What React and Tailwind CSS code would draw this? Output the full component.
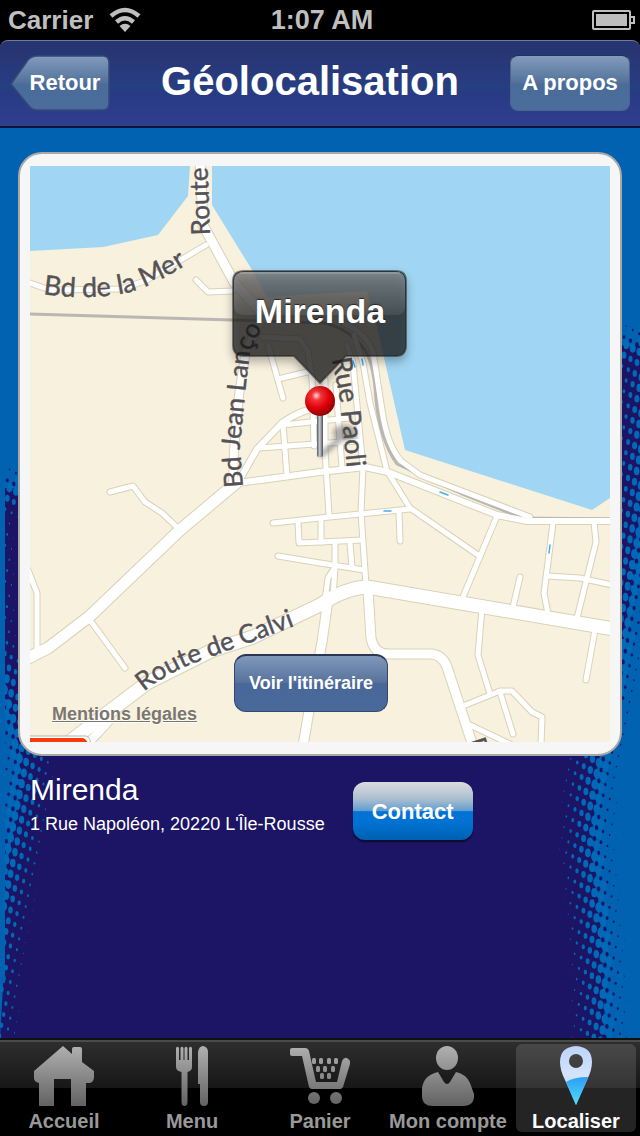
import React, { useMemo } from 'react';

const WATER_LEFT = 'M30 166 H190 L188 196 L158 235 L103 247 L30 251 Z';
const WATER_RIGHT = 'M212 166 V205 L252 270 L267 297 L367 291 L377 327 L405 450 L592 510 L610 498 V166 Z';

const RAILWAY = 'M30 314 L232 320 L325 323 Q352 330 366 352 Q374 366 376 400 Q380 440 397 464 L460 493 L522 518 L610 519';

// width + path of every street, thin ones first
const ROADS = [
  { w: 4, d: 'M30 283 L50 290 L120 289 L145 281 L206 245' },
  { w: 4, d: 'M196 280 L208 292 L233 291' },
  { w: 4, d: 'M110 492 L133 486 L145 502 L162 513 L180 530' },
  { w: 4, d: 'M90 620 L125 668' },
  { w: 4, d: 'M28 570 L37 593 V652' },
  { w: 5, d: 'M240 479 L257 449 L282 423 Q300 410 320 407' },
  { w: 4, d: 'M283 424 L287 476' },
  { w: 4, d: 'M282 425 L349 418' },
  { w: 4, d: 'M259 448 L357 441' },
  { w: 4, d: 'M262 337 L300 339 L308 352 L312 378' },
  { w: 4, d: 'M268 345 L283 398' },
  { w: 4, d: 'M278 379 L307 372' },
  { w: 4, d: 'M312 375 L314 446' },
  { w: 4, d: 'M325 380 L325 450 L329 515' },
  { w: 4, d: 'M336 385 L342 468' },
  { w: 4, d: 'M347 345 L353 363 L360 437 L363 467 L361 513 L366 585' },
  { w: 4, d: 'M354 335 L363 363 L370 403 L387 471 L410 508 L478 555' },
  { w: 4, d: 'M345 324 Q366 333 373 352 L382 410 Q387 445 401 461 L420 475 L530 517' },
  { w: 5, d: 'M238 483 L320 472 L365 467 L388 472 L497 515 L527 521 L612 521' },
  { w: 4, d: 'M273 523 L320 518 L410 509' },
  { w: 4, d: 'M298 522 L299 543 L362 540' },
  { w: 4, d: 'M321 518 V542' },
  { w: 4, d: 'M278 556 L320 563 L364 570' },
  { w: 4, d: 'M335 543 V567 L333 598' },
  { w: 4, d: 'M335 567 L328 578 L325 600' },
  { w: 4, d: 'M350 543 L352 567' },
  { w: 4, d: 'M399 513 L400 541' },
  { w: 4, d: 'M497 516 L463 597' },
  { w: 4, d: 'M553 523 L544 593 L548 614' },
  { w: 4, d: 'M594 522 L596 542 L577 618' },
  { w: 4, d: 'M547 576 L580 578 L612 585' },
  { w: 4, d: 'M520 577 L513 607' },
  { w: 4, d: 'M595 630 L586 680' },
  { w: 4, d: 'M482 608 L478 655 L490 694' },
  { w: 4, d: 'M463 706 L500 691 H512 L532 712 L542 717 L541 744' },
  { w: 4, d: 'M500 692 L513 734' },
  { w: 4, d: 'M470 725 L510 744' },
  { w: 7, d: 'M233 487 L234 450 L239 395 L246 350 L264 316' },
  { w: 8, d: 'M200 160 L203 225 L234 282 L266 318' },
  { w: 10, d: 'M20 662 L48 648 L90 616 L180 530 L236 483' },
  { w: 7, d: 'M108 722 L98 733 L86 745' },
  { w: 8, d: 'M328 600 L322 642 L310 705 L303 746' },
  { w: 8, d: 'M368 590 L371 638 Q374 654 388 654 H430 Q442 654 447 667 L473 746' },
  { w: 12, d: 'M64 746 L147 683 L213 650 L253 637 L320 605 Q345 588 367 587 L614 629' },
];

const ONE_WAY_MARKS = ['M440 492 l8 3', 'M384 511 h7', 'M550 545 l-1 8', 'M353 361 l2 6', 'M362 359 l1 6'];

// Edges of the dark area behind the page, as [y, x] stops
const LEFT_EDGE = [[470, -20], [640, -16], [680, 4], [720, 12], [760, 22], [800, 18], [850, 10], [900, 2], [950, -7], [1040, -16]];
const RIGHT_EDGE = [[300, 650], [500, 640], [560, 634], [620, 627], [700, 613], [740, 603], [780, 595], [850, 592], [900, 597], [970, 603], [1040, 604]];
const LEFT_TOP = 488;
const RIGHT_TOP = 346;

const edgeAt = (stops, y) => {
  if (y <= stops[0][0]) return stops[0][1];
  for (let i = 1; i < stops.length; i++) {
    const [y1, x1] = stops[i];
    const [y0, x0] = stops[i - 1];
    if (y <= y1) return x0 + ((x1 - x0) * (y - y0)) / (y1 - y0);
  }
  return stops[stops.length - 1][1];
};

// how far a point lies inside the dark area, negative when outside
const depthAt = (x, y) => {
  const top = x < 320 ? LEFT_TOP : RIGHT_TOP;
  return Math.min(x - edgeAt(LEFT_EDGE, y), edgeAt(RIGHT_EDGE, y) - x, y - top);
};

const buildHalftone = () => {
  const light = [];
  const dark = [];
  for (let i = -5; i < 120; i++) {
    for (let j = -40; j < 110; j++) {
      const x = i * 6.5 - j * 2.2;
      const y = i * 3.7 + j * 10.8;
      if (x > -6 && x < 646 && y > 300 && y < 1046) {
        const d = depthAt(x, y);
        if (d > -8 && d < 34) light.push({ x, y, r: 4.1 * (1 - Math.max(d, 0) / 36) });
      }
      const dx = x + 2.1;
      const dy = y + 7.2;
      if (dx > -6 && dx < 646 && dy > 300 && dy < 1046) {
        const d = depthAt(dx, dy);
        if (d <= 2 && d > -26) dark.push({ x: dx, y: dy, r: 2.3 * (1 + d / 28) });
      }
    }
  }
  return { light, dark };
};

const Backdrop = () => {
  const { light, dark } = useMemo(buildHalftone, []);
  const points = [
    `5,${LEFT_TOP}`,
    `320,${LEFT_TOP}`,
    `320,${RIGHT_TOP}`,
    `648,${RIGHT_TOP}`,
    ...RIGHT_EDGE.filter(([y]) => y > RIGHT_TOP).map(([y, x]) => `${x},${y}`),
    ...[...LEFT_EDGE].reverse().map(([y, x]) => `${Math.max(x, y < 984 ? 5 : 0)},${y}`),
  ].join(' ');

  return (
    <svg className="absolute inset-0 h-full w-full" viewBox="0 128 640 910" preserveAspectRatio="none" aria-hidden="true">
      <polygon points={points} fill="#1c1464" />
      {light.map((p, i) => <ellipse key={i} cx={p.x} cy={p.y} rx={p.r * 0.8} ry={p.r * 1.2} fill="#0069b8" />)}
      {dark.map((p, i) => <ellipse key={i} cx={p.x} cy={p.y} rx={p.r * 0.85} ry={p.r * 1.2} fill="#1c1464" />)}
      <rect x="0" y="460" width="5" height="523" fill="#0062b0" />
    </svg>
  );
};

const StatusBar = () => (
  <div className="grid h-10 grid-cols-3 items-center bg-black pl-2 pr-1 font-bold text-[#bfbfbf]">
    <div className="flex items-center gap-4 text-[26px] leading-10">
      Carrier
      <svg className="h-7 w-8" viewBox="0 0 32 28" fill="none" stroke="#bfbfbf" strokeWidth="4.500" aria-label="Wi-Fi">
        <path d="M2 10 Q16 -2 30 10" />
        <path d="M7.500 16 Q16 8.500 24.500 16" />
        <path d="M16 26 L10.500 20 Q16 15.500 21.500 20 Z" fill="#bfbfbf" stroke="none" />
      </svg>
    </div>
    <div className="text-center text-[27px] leading-10">1:07 AM</div>
    <svg className="h-5 w-11 justify-self-end" viewBox="0 0 44 20" aria-label="Battery">
      <rect x="1" y="1" width="37" height="18" rx="1" fill="none" stroke="#bfbfbf" strokeWidth="2" />
      <rect x="4" y="4" width="31" height="12" fill="#bfbfbf" />
      <path d="M38 7 h4 v6 h-4" fill="none" stroke="#bfbfbf" strokeWidth="2" />
    </svg>
  </div>
);

const Header = () => (
  <div className="bg-black">
    <header className="flex h-[88px] items-center rounded-t-lg border-b-2 border-t border-b-[#10143c] border-t-[#7079a5] bg-[linear-gradient(#26346f,#293b80_46%,#24407f_54%,#293a85_62%,#2f3f8e)] px-[10px] pb-[2px] text-white">
      <button className="relative h-[56px] w-[100px] pl-[10px] text-[22px] font-bold">
        <svg className="absolute inset-0 h-full w-full" viewBox="0 0 100 56" preserveAspectRatio="none" aria-hidden="true">
          <defs>
            <linearGradient id="back" x1="0" y1="0" x2="0" y2="1">
              <stop offset="0" stopColor="#839bbd" />
              <stop offset="0.5" stopColor="#527199" />
              <stop offset="0.52" stopColor="#496c9b" />
              <stop offset="1" stopColor="#4a6d9c" />
            </linearGradient>
          </defs>
          <path d="M1 29 L18 5 Q22 1 27 1 H93 Q99 1 99 8 V48 Q99 55 93 55 H27 Q22 55 19 51 Z" fill="url(#back)" stroke="#344978" strokeWidth="1.500" />
        </svg>
        <span className="relative">Retour</span>
      </button>
      <h1 className="flex-1 pb-1 text-center text-[40px] font-bold leading-none">Géolocalisation</h1>
      <button className="h-[56px] w-[120px] rounded-lg border border-[#4d648e] border-t-[#26305a] bg-[linear-gradient(#839bbd,#527199_50%,#496c9b_52%,#4a6d9c)] text-[22px] font-bold">
        A propos
      </button>
    </header>
  </div>
);

const MapDrawing = () => (
  <svg className="block h-full w-full" viewBox="30 166 580 576" preserveAspectRatio="xMidYMid slice" fontFamily="Lato, sans-serif">
    <defs>
      <path id="bdMer" d="M43 294 Q90 301 130 292 Q160 283 200 256" />
      <path id="bdJean" d="M243 487 L240 446 L246 385 L249 358 Q253 340 276 306" />
      <path id="ruePaoli" d="M332 359 L340 400 L348 478" />
      <path id="calvi" d="M144 692 Q168 672 200 661 L300 624" />
    </defs>
    <rect x="30" y="166" width="580" height="576" fill="#f8f1de" />
    <path d={WATER_LEFT} fill="#a0d6f3" />
    <path d={WATER_RIGHT} fill="#a0d6f3" />
    <g fill="none" strokeLinecap="round" strokeLinejoin="round">
      {ROADS.map((r) => <path key={r.d} d={r.d} stroke="#d9d2b8" strokeWidth={r.w + 3} />)}
      <path d={RAILWAY} stroke="#b9b6b4" strokeWidth="3" />
      {ROADS.map((r) => <path key={r.d} d={r.d} stroke="#ffffff" strokeWidth={r.w + 1} />)}
      {ONE_WAY_MARKS.map((d) => <path key={d} d={d} stroke="#45aef0" strokeWidth="1.500" />)}
    </g>
    <g fontSize="26" fill="#545256" stroke="#545256" strokeWidth="0.4">
      <text transform="translate(210 235) rotate(-92)">Route</text>
      <text fontSize="27"><textPath href="#bdMer">Bd de la Mer</textPath></text>
      <text><textPath href="#bdJean">Bd Jean Lanço</textPath></text>
      <text fontSize="27"><textPath href="#ruePaoli">Rue Paoli</textPath></text>
      <text><textPath href="#calvi">Route de Calvi</textPath></text>
      <text transform="translate(467 741) rotate(72)">R</text>
    </g>
    <path d="M28 736 H86 Q90 737 91 744 H28 Z" fill="#fff" stroke="#b9b3a4" />
    <path d="M28 738 H83 Q87 739 88 744 H28 Z" fill="#f93a0d" />
  </svg>
);

const Pin = () => (
  <svg className="absolute left-1/2 top-[218px] h-[76px] w-[84px] -translate-x-1/2" viewBox="-42 0 84 76" aria-hidden="true">
    <defs>
      <radialGradient id="pinHead" cx="0.38" cy="0.32" r="0.7">
        <stop offset="0" stopColor="#ffd9d9" />
        <stop offset="0.22" stopColor="#f4353a" />
        <stop offset="0.6" stopColor="#dd0208" />
        <stop offset="1" stopColor="#8d0004" />
      </radialGradient>
      <linearGradient id="pinStem">
        <stop offset="0" stopColor="#55585e" />
        <stop offset="0.45" stopColor="#c9cdd6" />
        <stop offset="1" stopColor="#4b4d52" />
      </linearGradient>
      <filter id="soft"><feGaussianBlur stdDeviation="2.500" /></filter>
    </defs>
    <g filter="url(#soft)" opacity="0.45">
      <path d="M0 72 L20 55" stroke="#333" strokeWidth="5" />
      <ellipse cx="25" cy="49" rx="12" ry="8" fill="#444" />
    </g>
    <rect x="-3" y="28" width="6" height="45" rx="2" fill="url(#pinStem)" />
    <circle cx="0" cy="17" r="15" fill="url(#pinHead)" />
  </svg>
);

const Callout = () => (
  <div className="absolute left-1/2 top-[104px] h-[114px] w-[176px] -translate-x-1/2">
    <svg className="absolute inset-0 h-full w-full overflow-visible drop-shadow-[0_5px_5px_rgba(0,0,0,0.4)]" viewBox="0 0 176 114" aria-hidden="true">
      <defs>
        <linearGradient id="gloss" x1="0" y1="0" x2="0" y2="1">
          <stop offset="0" stopColor="#fff" stopOpacity="0.32" />
          <stop offset="1" stopColor="#fff" stopOpacity="0.08" />
        </linearGradient>
      </defs>
      <path
        d="M12 1 H164 Q174 1 174 11 V75 Q174 86 164 86 H114 L88 113 L62 86 H12 Q1 86 1 75 V11 Q1 1 12 1 Z"
        fill="rgba(24,24,24,0.7)"
        stroke="rgba(30,30,30,0.5)"
        strokeWidth="2"
      />
      <path d="M12 2 H164 Q173 2 173 11 V36 Q173 45 164 45 H12 Q2 45 2 36 V11 Q2 2 12 2 Z" fill="url(#gloss)" />
      <path d="M8 3 H168" stroke="#fff" strokeOpacity="0.3" />
    </svg>
    <p className="relative text-center text-[34px] font-bold leading-[82px] text-white [text-shadow:0_-1px_1px_rgba(0,0,0,0.6)]">Mirenda</p>
  </div>
);

const MapCard = () => (
  <section className="rounded-3xl border-2 border-[#a8a8a8] bg-[#f6f6f6] px-[10px] py-3">
    <div className="relative h-[576px] overflow-hidden">
      <MapDrawing />
      <Pin />
      <Callout />
      <a href="#mentions" className="absolute bottom-4 left-[22px] text-[18px] font-bold leading-6 text-[#7b776f] underline [text-shadow:0_1px_0_#fff]">
        Mentions légales
      </a>
      <button className="absolute bottom-[30px] left-[204px] h-[58px] w-[154px] rounded-xl border border-[#33476f] border-t-2 border-t-[#2b3752] bg-[linear-gradient(#8198bb,#56719b_49%,#486899_50%,#48699a)] text-[18px] font-bold text-white">
        Voir l'itinéraire
      </button>
    </div>
  </section>
);

const PlaceInfo = () => (
  <section className="flex items-start gap-7 px-3 pt-4 text-white">
    <div>
      <h2 className="text-[30px] leading-9">Mirenda</h2>
      <p className="mt-1 text-[18px] leading-6">1 Rue Napoléon, 20220 L'Île-Rousse</p>
    </div>
    <button className="mt-[10px] h-[58px] w-[120px] rounded-xl bg-[linear-gradient(#dcdcdf,#a9bdd0_30%,#5f9ccf_50%,#0074d6_51%,#0072d2_70%,#0060b2)] text-[22px] font-bold shadow-[0_2px_1px_#0b0a2c]">
      Contact
    </button>
  </section>
);

const HomeIcon = () => (
  <svg className="h-[60px] w-[62px]" viewBox="0 0 62 60" fill="url(#tabGrey)" aria-hidden="true">
    <path d="M30 0 L39 8 V3 Q39 1 41 1 H47 Q49 1 49 3 V16 L61 25 V32 Q60 37 56 37 H53 V60 H38 V33 H21 V60 H6 V37 Q1 36 1 32 V25 Z" />
  </svg>
);

const MenuIcon = () => (
  <svg className="h-[60px] w-8" viewBox="0 0 32 60" fill="url(#tabGrey)" aria-hidden="true">
    <path d="M0 2 Q1.500 -0.500 3 2 V14 H4.500 V2 Q6 -0.500 7.500 2 V14 H8.500 V2 Q10 -0.500 11.500 2 V14 H13 V2 Q14.500 -0.500 16 2 V21 Q16 25 11.500 26 V56 Q11.500 60 8.500 60 Q5.500 60 5.500 56 V26 Q0 25 0 21 Z" />
    <path d="M22 38 V6 Q23 0 27 0 Q32 1 32 6 V56 Q32 60 28 60 Q24 60 24 56 V38 Z" />
  </svg>
);

const CartIcon = () => (
  <svg className="h-[60px] w-[60px]" viewBox="0 0 60 60" fill="url(#tabGrey)" aria-hidden="true">
    <path d="M2 2 H15 Q18 2 19 5 L26 36 H47 L52 15 Q54 11 57 12 Q61 14 60 18 L53 41 Q52 43 50 43 H22 Q20 43 19 41 L12 10 H2 Q0 10 0 8 V4 Q0 2 2 2 Z" />
    <circle cx="24" cy="52" r="6" />
    <circle cx="46" cy="52" r="6" />
    {[[24, 15], [31, 15], [39, 15], [46, 15], [28, 23], [35, 23], [43, 23], [32, 30], [39, 30]].map(([x, y]) => (
      <rect key={`${x}-${y}`} x={x - 2} y={y - 3} width="4" height="6" rx="1.500" />
    ))}
  </svg>
);

const AccountIcon = () => (
  <svg className="h-[60px] w-[54px]" viewBox="0 0 54 60" fill="url(#tabGrey)" aria-hidden="true">
    <ellipse cx="26" cy="12" rx="11" ry="12" />
    <path d="M17 26 L23 36 Q26 40 29 36 L35 26 Q45 28 49 37 L53 48 Q54 60 42 60 H12 Q1 60 1 50 V42 Q3 29 17 26 Z" />
  </svg>
);

const LocateIcon = () => (
  <svg className="h-[60px] w-8" viewBox="0 0 32 60" aria-hidden="true">
    <defs>
      <linearGradient id="locateTop" x1="0" y1="0" x2="0" y2="1">
        <stop offset="0" stopColor="#bdd3fb" />
        <stop offset="0.500" stopColor="#d4e4fb" />
        <stop offset="1" stopColor="#8fc4f7" />
      </linearGradient>
      <linearGradient id="locateTip" x1="0" y1="0" x2="0" y2="1">
        <stop offset="0" stopColor="#2f9cf3" />
        <stop offset="1" stopColor="#4be0fd" />
      </linearGradient>
    </defs>
    <path fillRule="evenodd" d="M16 0 Q32 1 32 16 Q32 24 27 34 L16 59 L5 34 Q0 24 0 16 Q0 1 16 0 Z M16 8 A7 7 0 1 0 16 22 A7 7 0 1 0 16 8 Z" fill="url(#locateTop)" />
    <path d="M6 36 Q14 31 28 31 L27 34 L16 59 Z" fill="url(#locateTip)" />
  </svg>
);

const TABS = [
  { label: 'Accueil', Icon: HomeIcon },
  { label: 'Menu', Icon: MenuIcon },
  { label: 'Panier', Icon: CartIcon },
  { label: 'Mon compte', Icon: AccountIcon },
  { label: 'Localiser', Icon: LocateIcon, active: true },
];

const TabBar = () => (
  <nav className="relative grid h-[98px] grid-cols-5 border-t-2 border-[#111] bg-[linear-gradient(#4a4a4a_2px,#2e2e2e_2px,#171717_48px,#000_48px)]">
    <svg className="absolute h-0 w-0" aria-hidden="true">
      <defs>
        <linearGradient id="tabGrey" x1="0" y1="0" x2="0" y2="60" gradientUnits="userSpaceOnUse">
          <stop offset="0" stopColor="#b0b0b0" />
          <stop offset="1" stopColor="#626262" />
        </linearGradient>
      </defs>
    </svg>
    {TABS.map(({ label, Icon, active }) => (
      <button
        key={label}
        className={`m-1 flex flex-col items-center gap-1 whitespace-nowrap rounded-md pt-[2px] text-[20px] font-bold leading-[22px] ${active ? 'bg-[linear-gradient(#484848,#343434_44px,#242424_44px)] text-white' : 'text-[#999]'}`}
      >
        <Icon />
        {label}
      </button>
    ))}
  </nav>
);

const App = () => (
  <div className="flex min-h-screen flex-col bg-[#0062b0] font-['Liberation_Sans',Arial,sans-serif]">
    <StatusBar />
    <Header />
    <main className="relative flex-1">
      <Backdrop />
      <div className="relative px-[18px] pt-6">
        <MapCard />
        <PlaceInfo />
      </div>
    </main>
    <TabBar />
  </div>
);

export default App;
